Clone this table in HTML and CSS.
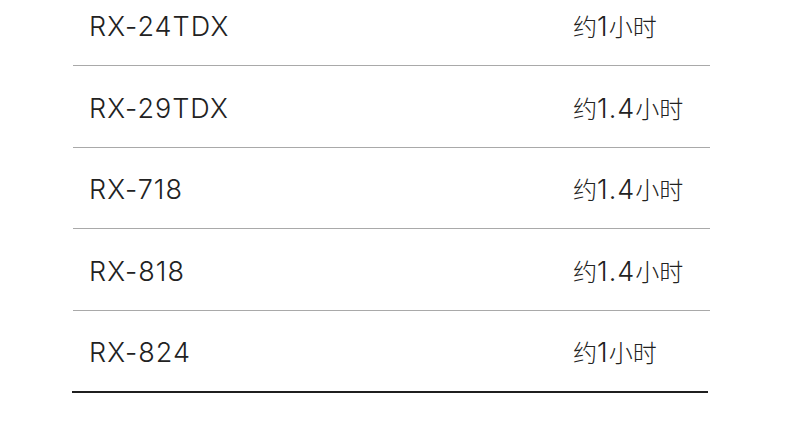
FILE: index.html
```html
<!DOCTYPE html>
<html lang="zh">
<head>
<meta charset="utf-8">
<link rel="stylesheet" href="styles.css">
</head>
<body>
<div class="table">
  <div class="row"><div class="model">RX-24TDX</div><div class="time"><span class="cjk">约</span>1<span class="cjk">小时</span></div></div>
  <div class="row"><div class="model">RX-29TDX</div><div class="time"><span class="cjk">约</span>1.4<span class="cjk">小时</span></div></div>
  <div class="row short"><div class="model">RX-718</div><div class="time"><span class="cjk">约</span>1.4<span class="cjk">小时</span></div></div>
  <div class="row"><div class="model">RX-818</div><div class="time"><span class="cjk">约</span>1.4<span class="cjk">小时</span></div></div>
  <div class="row last"><div class="model">RX-824</div><div class="time"><span class="cjk">约</span>1<span class="cjk">小时</span></div></div>
</div>
</body>
</html>
```
FILE: styles.css
```css
html, body {
  margin: 0;
  padding: 0;
  background: #fff;
  overflow: hidden;
}
body {
  font-family: "Inter", "Liberation Sans", "Noto Sans CJK SC", sans-serif;
  font-weight: 300;
  color: #222;
}
.table {
  width: 637px;
  margin: -16px 0 0 73px;
}
.row {
  box-sizing: border-box;
  display: grid;
  grid-template-columns: 484px 1fr;
  align-items: center;
  height: 82px;
  border-bottom: 1px solid #a9a9a9;
  font-size: 27px;
  letter-spacing: 1px;
}
.row.short {
  height: 81px;
}
.row.last {
  border-bottom: 2px solid #1f1f1f;
  width: 636px;
  margin-left: -1px;
  padding-left: 1px;
}
.model, .time {
  padding-left: 16px;
  padding-top: 3px;
  line-height: 1;
}
.cjk {
  font-family: "Noto Sans CJK SC", sans-serif;
  font-weight: 300;
  font-size: 24px;
  letter-spacing: 0;
}
```
